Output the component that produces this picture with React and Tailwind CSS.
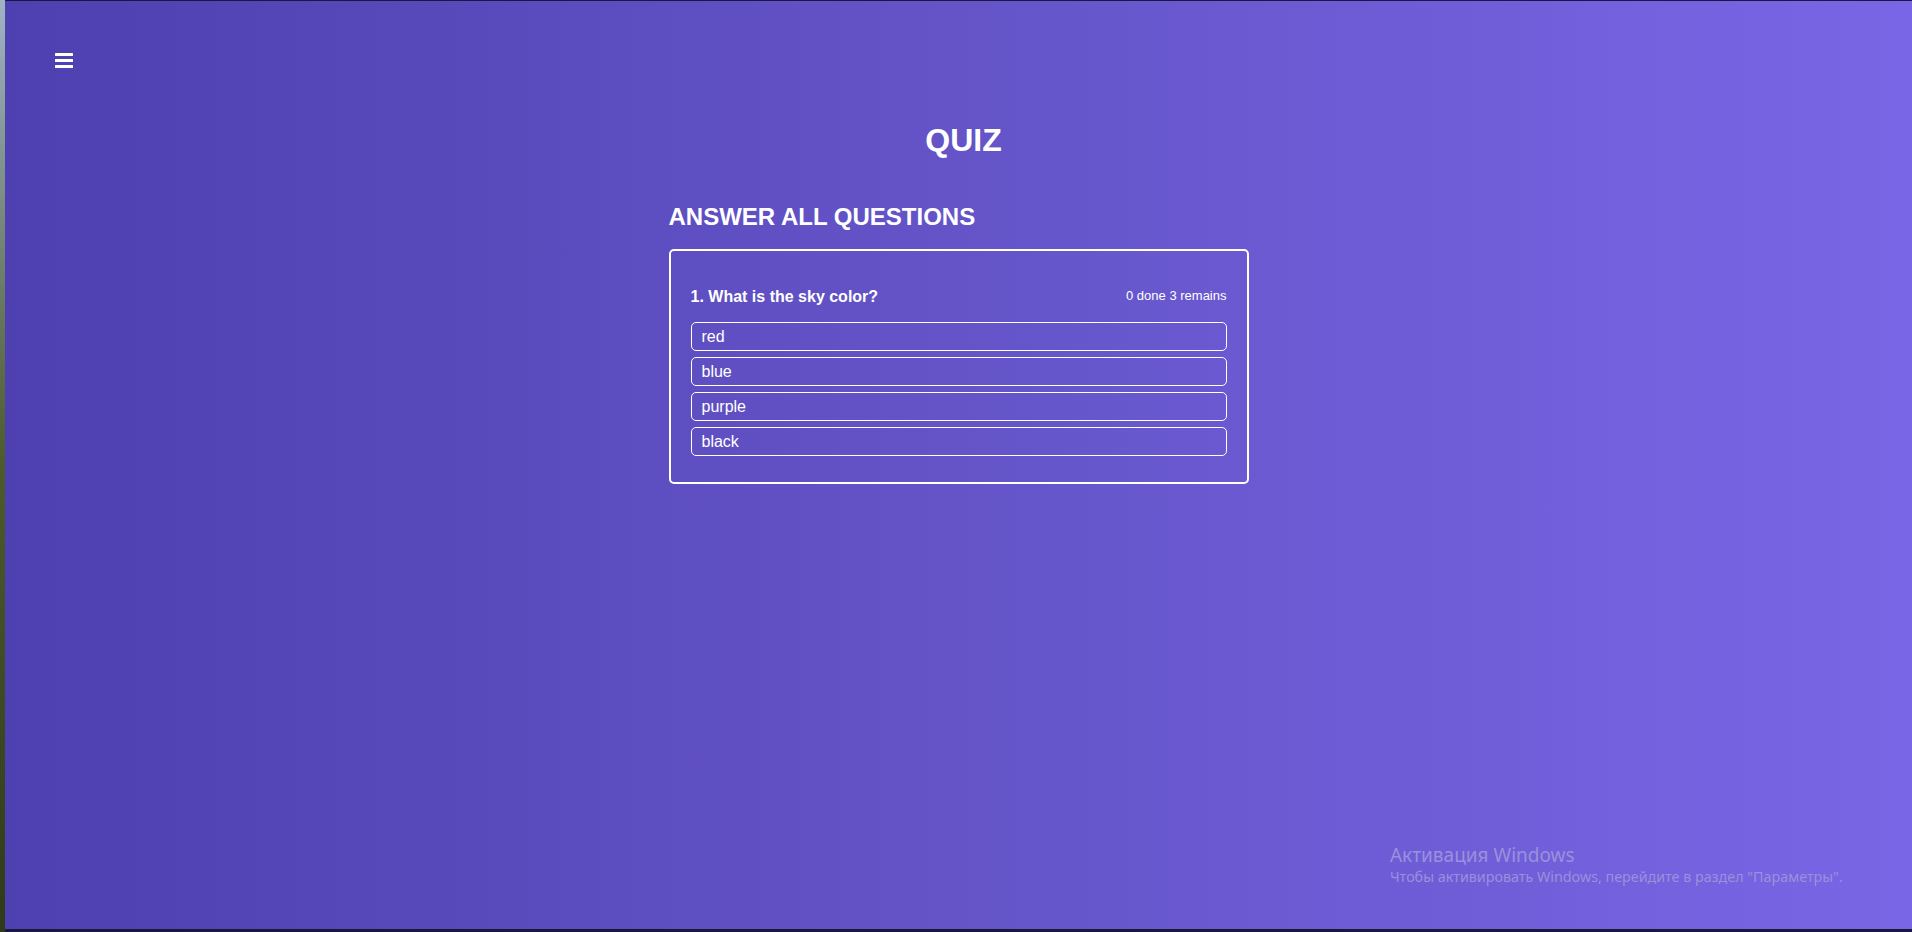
import { useState } from "react"

const questions = [
  { title: "What is the sky color?", options: ["red", "blue", "purple", "black"] },
]

function MenuIcon() {
  return (
    <svg width="18" height="16" viewBox="0 0 18 16" fill="#fff">
      <rect x="0" y="1" width="18" height="3" rx="0.5" />
      <rect x="0" y="7" width="18" height="3" rx="0.5" />
      <rect x="0" y="13" width="18" height="3" rx="0.5" />
    </svg>
  )
}

export default function App() {
  const [answers, setAnswers] = useState({})
  const done = Object.keys(answers).length
  const total = 3

  return (
    <div className="flex h-[932px] w-full overflow-hidden bg-[#1b1840] font-['Liberation_Sans',Arial,sans-serif]">
      {/* desktop wallpaper sliver */}
      <div className="w-[5px] shrink-0 bg-gradient-to-b from-[#9fb3c6] via-[#4d5a2a] to-[#2f3a1c]" />

      <div className="relative mt-px mb-[3px] flex-1 bg-gradient-to-r from-[#4f40b1] via-[#6454c8] to-[#7966e6] text-white">
        {/* Header */}
        <div className="pl-[50px] pt-[51px]">
          <button className="block">
            <MenuIcon />
          </button>
        </div>

        <div className="mx-auto w-[580px]">
          <h1 className="mt-[54px] translate-x-[5px] text-center text-[32px] font-bold leading-[37px]">QUIZ</h1>
          <h2 className="mt-[44px] text-[24px] font-bold leading-[28px]">ANSWER ALL QUESTIONS</h2>

          {/* Quiz card */}
          <div className="mt-[18px] rounded-[5px] border-2 border-white px-5 pt-[37px] pb-[26px]">
            {questions.map((q, qi) => (
              <div key={qi}>
                <div className="mb-[16px] flex items-center justify-between">
                  <p className="text-base font-bold leading-[18px]">
                    {qi + 1}. {q.title}
                  </p>
                  <span className="-translate-y-[2px] text-[13px] leading-[15px]">
                    {done} done {total - done} remains
                  </span>
                </div>
                <div className="flex flex-col gap-[6px]">
                  {q.options.map((opt) => (
                    <button
                      key={opt}
                      onClick={() => setAnswers({ ...answers, [qi]: opt })}
                      className="flex h-[29px] items-center rounded-[5px] border border-white px-[10px] text-left text-base leading-[18px]"
                    >
                      {opt}
                    </button>
                  ))}
                </div>
              </div>
            ))}
          </div>
        </div>

        {/* Windows activation watermark */}
        <div className="pointer-events-none absolute left-[1385px] top-[842px] font-['Noto_Sans','Open_Sans',sans-serif] text-[#9a90dc]">
          <p className="text-[19px] leading-[24px]">Активация Windows</p>
          <p className="text-[14.3px] leading-[20px]">Чтобы активировать Windows, перейдите в раздел "Параметры".</p>
        </div>
      </div>
    </div>
  )
}
